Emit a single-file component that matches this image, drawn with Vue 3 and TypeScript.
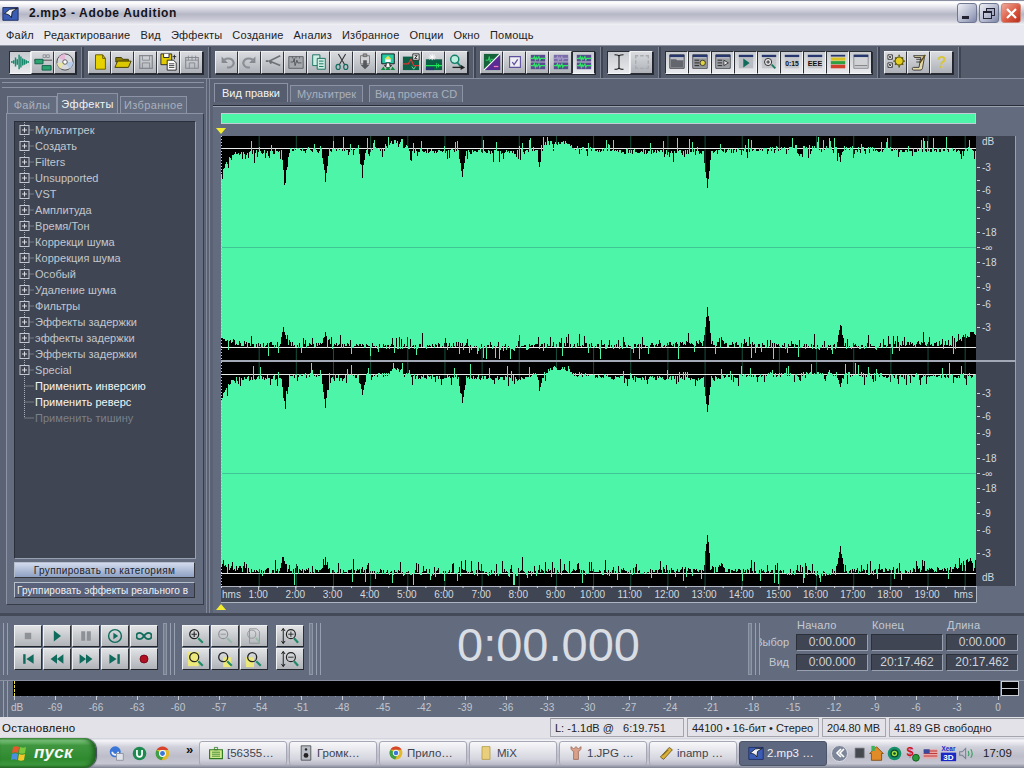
<script setup lang="ts">
import { h } from 'vue'
import type { FunctionalComponent } from 'vue'

type Shape = { d?: string; f?: string; s?: string; w?: number; t?: string; x?: number; y?: number; z?: number }

const P = (d: string, f = 'none', s = 'none', w = 1): Shape => ({ d, f, s, w })
const T = (t: string, x: number, y: number, z: number, f: string): Shape => ({ t, x, y, z, f })

const TEAL = '#0f6b5c'
const win = (extra: Shape[] = []): Shape[] => [
  P('M2 2h16v15H2z', '#b9bcc2', '#3a3d44'),
  P('M2 2h16v2.5H2z', '#26366e'),
  ...extra,
]
const stereo = (a: string, b: string, wave1: string, wave2: string): Shape[] => [
  P('M2 2h16v7.5H2z', a),
  P('M2 10.5h16V18H2z', b),
  P('M2 6h3l1-2 1 4 1-3 1 2 2-3 1 4 1-2h5', 'none', wave1, 1.3),
  P('M2 14h3l1-2 1 4 1-3 1 2 2-3 1 4 1-2h5', 'none', wave2, 1.3),
]
const mag = (inner: Shape[] = [], bg: Shape[] = []): Shape[] => [
  ...bg,
  P('M12.5 12.5l5 5', 'none', '#1d8a66', 2.4),
  P('M13 8a5 5 0 1 1-10 0a5 5 0 1 1 10 0z', 'none', '#222', 1.4),
  ...inner,
]
const vmag = (inner: string): Shape[] => [
  P('M2.5 2v16M.5 4.5l2-3 2 3M.5 15.5l2 3 2-3', 'none', '#111'),
  P('M14.5 12.5l4.5 5', 'none', '#1d8a66', 2.4),
  P('M16 8a5 5 0 1 1-10 0a5 5 0 1 1 10 0z', 'none', '#222', 1.3),
  P(inner, 'none', '#222'),
]

const icons: Record<string, Shape[]> = {
  wave: [P('M1 9v2M3 8v4M5 5v10M7 7v6M9 2v16M11 4v12M13 6v8M15 7v6M17 8v4M19 9v2', 'none', '#17896c', 1.6)],
  multi: [
    P('M10 2h3v3h-3zM14 2h3v3h-3z', 'none', '#8a8d92'),
    P('M0 8h20', 'none', '#444'),
    P('M1 7h9v5H1z', '#2aa36f', '#0c5c46'),
    P('M9 14h10v5H9z', '#2aa36f', '#0c5c46'),
  ],
  cd: [
    P('M19 10a9 9 0 1 1-18 0a9 9 0 1 1 18 0z', '#d8dae0', '#444'),
    P('M10 10L3 5a9 9 0 0 1 7-4z', '#e9b7d8'),
    P('M10 10L19 10a9 9 0 0 1-4 7.5z', '#b7cdea'),
    P('M10 10L5 17.5a9 9 0 0 1-4-6z', '#e8e3a6'),
    P('M12.5 10a2.5 2.5 0 1 1-5 0a2.5 2.5 0 1 1 5 0z', '#fff', '#555'),
  ],
  new: [P('M5 2h8l3 4v12H5z', '#e6d200', '#5d5400'), P('M13 2v4h3', 'none', '#5d5400')],
  open: [P('M2 8V5h6l2 2h6v3H2z', '#8a7c00', '#3b3500'), P('M1 16l3-7h15l-3 7z', '#dcc800', '#3b3500')],
  save: [P('M3 3h14v14H3z', 'none', '#85888e', 1.4), P('M6 3v5h8V3M6 17v-6h8v6', 'none', '#85888e')],
  saveas: [
    P('M1 1h12v12H1z', '#e2cc00', '#222'),
    P('M4 1v4h6V1', '#fff', '#222'),
    P('M8 8h7l3 3v8H8z', '#fff', '#222'),
    P('M10 12h6M10 14h6M10 16h6', 'none', '#333'),
    P('M16 2v5M14 4h4', 'none', '#222'),
  ],
  savesel: [
    P('M3 5h14v12H3z', 'none', '#85888e', 1.2),
    P('M3 8h14M6 3v5M10 3v5M14 3v5', 'none', '#85888e'),
    P('M7 17v-6h6v6', 'none', '#85888e'),
  ],
  undo: [P('M4 4v7h7', '#85888e'), P('M6 9a6 5 0 1 1 4 7', 'none', '#8c8f95', 2.4)],
  redo: [P('M16 4v7H9', '#85888e'), P('M14 9a6 5 0 1 0-4 7', 'none', '#8c8f95', 2.4)],
  trim: [P('M18 3L6 9l2 3M6 9l12 5', 'none', '#6e7176', 1.8), P('M2 9h3', 'none', '#6e7176', 2)],
  silence: [
    P('M2 4h16v13H2z', '#a5a8ad', '#5a5d62'),
    P('M4 10h3l1-4 1 8 2-6 1 3h4', 'none', '#4e5156'),
    P('M6 4v2M10 4v2M14 4v2', 'none', '#5a5d62'),
  ],
  copy: [
    P('M3 2h8v12H3z', '#cfeee2', TEAL),
    P('M8 6h9v12H8z', '#cfeee2', TEAL),
    P('M10 9h5M10 12h5M10 15h5', 'none', TEAL),
  ],
  cut: [
    P('M6 1l7 12M14 1L7 13', 'none', '#333', 1.2),
    P('M8 15.5a2.3 2.8 0 1 1-4.6 0a2.3 2.8 0 1 1 4.6 0zM16.5 15.5a2.3 2.8 0 1 1-4.6 0a2.3 2.8 0 1 1 4.6 0z', 'none', TEAL, 1.3),
  ],
  paste: [
    P('M5 3h10v9H5z', '#cfd1d5', '#777'),
    P('M8 1h4v3H8z', '#999', '#666'),
    P('M8 8h4v5h3l-5 5-5-5h3z', '#55585d'),
  ],
  mix: [
    P('M3 1h14v11H3z', '#27c9a6', '#111'),
    P('M6 7l4-4 4 4z', '#e8e24a'),
    P('M7 7h6v3H7z', '#fff'),
    P('M8 11h4v3h2l-4 3-4-3h2z', '#fff', '#222'),
    P('M2 19l3-4 2 4 3-4 3 4 2-4 3 4z', '#0d8a3c'),
  ],
  mix2: [
    P('M1 4h18v15H1z', '#0a5f45'),
    P('M1 12h6l3-5 3 7h6', 'none', '#e03030', 1.3),
    P('M12 1h7v7h-7z', '#eee', '#222'),
    P('M14 3h3l-3 3h3', 'none', '#222'),
    P('M11 15l2 3 2-3', 'none', '#7be0a8'),
  ],
  mix3: [
    P('M1 7h18v12H1z', '#0a5f45'),
    P('M1 14h18', 'none', '#1ee85a', 1.3),
    P('M1 16h9v3H1z', '#26366e'),
    P('M8 1v7M4 4.5h8M5 2l6 5M11 2L5 7', 'none', '#fff'),
    P('M13 11v6M15 12v4', 'none', '#1ee85a'),
  ],
  q: [
    P('M12 7a4.5 4.5 0 1 1-9 0a4.5 4.5 0 1 1 9 0z', '#bdeee0', '#14806a', 1.6),
    P('M10 10l4 5', 'none', '#14806a', 2),
    P('M5 16h10', 'none', '#222', 1.5),
    P('M14 13l5 3-5 3z', '#222'),
  ],
  diag: [
    P('M1 1h18v18H1z', '#15633b'),
    P('M19 1v18H1z', '#5a2b92'),
    P('M1 19L19 1', 'none', '#fff', 1.4),
    P('M3 8h3l1-4 1 6 1-3h3', 'none', '#36e06e'),
    P('M12 15h5', 'none', '#f47cc0', 1.4),
  ],
  check: [P('M4 4h12v12H4z', '#eeeef2', '#6050a0', 1.2), P('M7 10l2 3 4-6', 'none', '#6050a0', 1.4)],
  st1: stereo('#5a4a90', '#5a4a90', '#2ee864', '#2ee864'),
  st2: stereo('#7a6ca8', '#5a4a90', '#a49ac6', '#2ee864'),
  st3: stereo('#5a4a90', '#5a4a90', '#2ee864', '#2ee864'),
  ibeam: [P('M5 2c4 0 5 1 5 2v12c0 1-1 2-5 2M15 2c-4 0-5 1-5 2v12c0 1 1 2 5 2', 'none', '#111', 1.2)],
  sel: [P('M3 6V3h3M8 3h4M14 3h3v3M17 8v4M17 14v3h-3M12 17H8M6 17H3v-3M3 12V8', 'none', '#a8abb0', 1.5)],
  w1: win([P('M3 7h6l1 1h7v8H3z', '#63666c')]),
  w2: win([P('M3 6h14v10H3z', '#8f9296'), P('M4 8h5M4 11h5M4 14h5', 'none', '#222'), P('M16 11a3 3 0 1 1-6 0a3 3 0 1 1 6 0z', '#e0d440', '#333')]),
  w3: win([P('M3 6h14v10H3z', '#9a9da2'), P('M4 8h5M4 11h5M4 14h5', 'none', '#222'), P('M11 8l5 3-5 3z', '#e9e9ec', '#333')]),
  w4: [P('M2 2h16v15H2z', '#b9bcc2'), P('M2 2h16v2.5H2z', '#26366e'), P('M7 6l7 5-7 5z', TEAL)],
  w5: [P('M2 2h16v15H2z', '#c4c6cb'), P('M2 2h16v2.5H2z', '#26366e'), P('M13 13l4 4', 'none', '#187a5c', 2), P('M13 10a4 4 0 1 1-8 0a4 4 0 1 1 8 0z', '#e6e7ea', '#222'), P('M7 10h4M9 8v4', 'none', '#222')],
  w6: [P('M2 2h16v15H2z', '#c4c6cb'), P('M2 2h16v2.5H2z', '#26366e'), T('0:15', 10, 14.5, 7.5, '#111')],
  w7: [P('M2 2h16v15H2z', '#c4c6cb'), P('M2 2h16v2.5H2z', '#26366e'), T('EEE', 10, 14.5, 8, '#111')],
  w8: [P('M2 2h16v2H2z', '#26366e'), P('M2 5h16v3.5H2z', '#d8c020'), P('M2 9h16v3.5H2z', '#2fa040'), P('M2 13h16v4H2z', '#d0402a')],
  w9: [P('M2 2h16v15H2z', '#d0d2d6', '#85888e'), P('M2 2h16v2.5H2z', '#26366e'), P('M3 14h14', 'none', '#777')],
  gear: [
    P('M1 2h5v5H1zM1 11h5v5H1z', '#fff', '#333'),
    P('M2 3l3 3M5 3L2 6M2 12l3 3M5 12l-3 3', 'none', '#333'),
    P('M18 9a4.5 4.5 0 1 1-9 0a4.5 4.5 0 1 1 9 0z', '#e2cd20', '#5d5400', 1.2),
    P('M13.5 2v2M13.5 14v2M7 9h2M18 9h2M9 5l1.5 1.5M18 13l-1.5-1.5M18 5l-1.5 1.5M9 13l1.5-1.5', 'none', '#5d5400', 1.6),
  ],
  scroll: [
    P('M4 3h12v2l-2 11c0 2-1 3-3 3H4c-2 0-2-3 0-3h6l2-11H5z', '#e6d9a8', '#333'),
    P('M7 7h6M7 10h5', 'none', '#333'),
    P('M17 2l-6 9', 'none', '#5d4a10', 1.6),
  ],
  help: [T('?', 10, 16.5, 18, '#d9c640')],
  stop: [P('M6 6h8v8H6z', '#8e9196')],
  play: [P('M6 3l9 7-9 7z', TEAL)],
  pause: [P('M4 4h5v12H4zM11 4h5v12h-5z', '#8e9196')],
  loopplay: [P('M18 10a8 8 0 1 1-16 0a8 8 0 1 1 16 0z', 'none', TEAL, 1.8), P('M8 6l6 4-6 4z', TEAL)],
  loop: [P('M10 10c-2-3-3.5-4-5.5-4a4 4 0 0 0 0 8c2 0 3.5-1 5.5-4s3.5-4 5.5-4a4 4 0 0 1 0 8c-2 0-3.5-1-5.5-4z', 'none', TEAL, 2.2)],
  begin: [P('M4 4h3v12H4z', TEAL), P('M17 4v12l-9-6z', TEAL)],
  rew: [P('M10 4v12l-8-6zM18 4v12l-8-6z', TEAL)],
  ff: [P('M2 4v12l8-6zM10 4v12l8-6z', TEAL)],
  end: [P('M3 4v12l9-6z', TEAL), P('M13 4h3v12h-3z', TEAL)],
  rec: [P('M15 10a5 5 0 1 1-10 0a5 5 0 1 1 10 0z', '#b01020', '#6a0010')],
  zin: mag([P('M5 8h6M8 5v6', 'none', '#222', 1.2)]),
  zout: [P('M12.5 12.5l5 5', 'none', '#94b8a8', 2.2), P('M13 8a5 5 0 1 1-10 0a5 5 0 1 1 10 0z', 'none', '#8e9196', 1.3), P('M5 8h6', 'none', '#8e9196')],
  zfull: [P('M5 2h8l3 3v13H5z', 'none', '#8e9196'), P('M12 12l4 5', 'none', '#94b8a8', 2), P('M12 8a4.5 4.5 0 1 1-9 0a4.5 4.5 0 1 1 9 0z', 'none', '#8e9196')],
  zsel: mag([], [P('M1 2h12v16H1z', '#ece87a')]),
  zleft: mag([], [P('M8 8h9v11H8z', '#ece87a')]),
  zright: mag([], [P('M1 8h9v11H1z', '#ece87a')]),
  vin: vmag('M8 8h6M11 5v6'),
  vout: vmag('M8 8h6'),
  ie: [P('M15 8a6.5 6.5 0 1 1-13 0a6.5 6.5 0 1 1 13 0z', '#3a76d8'), P('M12 8a3.5 3.5 0 1 1-7 0', 'none', '#f2f4f8', 2), P('M10 10h8v8h-8z', '#dfe3ea', '#8a8f9a')],
  ut: [P('M18 10a8 8 0 1 1-16 0a8 8 0 1 1 16 0z', '#1f8a50'), P('M6 6v5a4 4 0 0 0 8 0V6h-2v5a2 2 0 0 1-4 0V6z', '#fff')],
  chrome: [
    P('M18 10a8 8 0 1 1-16 0a8 8 0 1 1 16 0z', '#e2b92a'),
    P('M3 6a8 8 0 0 1 14 0h-7z', '#d8432e'),
    P('M3 6a8 8 0 0 0 6 12l3-6z', '#3f9e48'),
    P('M13.5 10a3.5 3.5 0 1 1-7 0a3.5 3.5 0 1 1 7 0z', '#3a76d8', '#fff', 1.2),
  ],
  torrent: [P('M2 6h16v11H2z', '#cfe890', '#2f7a20', 1.4), P('M8 3h4v3H8zM5 9h10M5 11.5h10M5 14h10', 'none', '#2f7a20')],
  speaker: [P('M4 1h12v18H4z', '#b8bcc4', '#444'), P('M13 13a3 3 0 1 1-6 0a3 3 0 1 1 6 0z', '#222'), P('M11.5 5.5a1.5 1.5 0 1 1-3 0a1.5 1.5 0 1 1 3 0z', '#222')],
  folder: [P('M5 2h10v16H5z', '#e9cf7c', '#b49a48')],
  jpg: [P('M7 8c-3-1-4-4-3-6l3 3 3-3 3 3 3-3c1 2 0 5-3 6v10H7z', '#d8a088', '#9a6858')],
  winamp: [P('M3 15L14 3l4 3L7 18z', '#d8b13a', '#6a4f10'), P('M6 13l7-7', 'none', '#6a4f10')],
  au: [P('M1 3h18v15H1z', '#3a5cb4', '#16275c'), P('M3 10l6-5 9-1-6 4-1 7c-1-3-4-4-8-5z', '#eef1f7', '#111')],
  tray1: [P('M3 3h13v14H3z', '#45484e', '#7d8087')],
  tray2: [P('M10 2l8 8h-2v8H4v-8H2z', '#e08a28', '#7a4a10'), P('M4 1h4v6H4z', '#3bb05a')],
  tray3: [P('M18 10a8 8 0 1 1-16 0a8 8 0 1 1 16 0z', '#148f68'), P('M14 10a4 4 0 1 1-8 0a4 4 0 1 1 8 0z', '#9fdc3c', '#0a4a38', 1.5), P('M11.5 10a1.5 1.5 0 1 1-3 0a1.5 1.5 0 1 1 3 0z', '#0a4a38')],
  tray4: [T('$', 7, 13, 15, '#d01818'), P('M18 15a4 4 0 1 1-8 0a4 4 0 1 1 8 0z', '#2a9a3a', '#11501a')],
  tray5: [P('M2 5h16v11H2z', '#e8a8a8'), P('M2 7h16M2 10h16M2 13h16', 'none', '#c03838', 1.2), P('M2 5h7v5H2z', '#384a9c')],
  tray6: [P('M1 9h18v10H1z', '#1a28c8'), T('Xear', 10, 7.5, 7.5, '#1a28c8'), T('3D', 10, 17.5, 9.5, '#fff')],
  tray7: [P('M2 8h3l4-4v12l-4-4H2z', 'none', '#78808e', 1.2), P('M12 7c1 2 1 4 0 6M15 5c2 3 2 7 0 10', 'none', '#38a060', 1.3)],
}

const Ico: FunctionalComponent<{ n: string; size?: number }> = (p) =>
  h(
    'svg',
    { viewBox: '0 0 20 20', width: p.size ?? 20, height: p.size ?? 20, style: 'display:block;flex:none' },
    icons[p.n].map((s) =>
      s.t
        ? h('text', { x: s.x, y: s.y, 'font-size': s.z, fill: s.f, 'text-anchor': 'middle', 'font-weight': 'bold', 'font-family': 'Liberation Sans, sans-serif' }, s.t)
        : h('path', { d: s.d, fill: s.f, stroke: s.s, 'stroke-width': s.w }),
    ),
  )

const menu = ['Файл', 'Редактирование', 'Вид', 'Эффекты', 'Создание', 'Анализ', 'Избранное', 'Опции', 'Окно', 'Помощь']

const toolbar: { n: string; on?: boolean }[][] = [
  [{ n: 'wave', on: true }, { n: 'multi' }, { n: 'cd' }],
  [{ n: 'new' }, { n: 'open' }, { n: 'save' }, { n: 'saveas' }, { n: 'savesel' }],
  [{ n: 'undo' }, { n: 'redo' }, { n: 'trim' }, { n: 'silence' }, { n: 'copy' }, { n: 'cut' }, { n: 'paste' }, { n: 'mix' }, { n: 'mix2' }, { n: 'mix3' }, { n: 'q' }],
  [{ n: 'diag' }, { n: 'check' }, { n: 'st1' }, { n: 'st2' }, { n: 'st3', on: true }],
  [{ n: 'ibeam', on: true }, { n: 'sel' }],
  [{ n: 'w1', on: true }, { n: 'w2', on: true }, { n: 'w3', on: true }, { n: 'w4', on: true }, { n: 'w5', on: true }, { n: 'w6', on: true }, { n: 'w7', on: true }, { n: 'w8', on: true }, { n: 'w9', on: true }],
  [{ n: 'gear' }, { n: 'scroll' }, { n: 'help' }],
]

const tree = [
  'Мультитрек', 'Создать', 'Filters', 'Unsupported', 'VST', 'Амплитуда', 'Время/Тон', 'Коррекци шума',
  'Коррекция шума', 'Особый', 'Удаление шума', 'Фильтры', 'Эффекты задержки', 'эффекты задержки',
  'Эффекты задержки', 'Special',
]

const transport = ['stop', 'play', 'pause', 'loopplay', 'loop', 'begin', 'rew', 'ff', 'end', 'rec']
const zooms = ['zin', 'zout', 'zfull', 'zsel', 'zleft', 'zright']

const quick = ['ie', 'ut', 'chrome']
const tasks = [
  { icon: 'torrent', label: '[56355…' },
  { icon: 'speaker', label: 'Громк…' },
  { icon: 'chrome', label: 'Прило…' },
  { icon: 'folder', label: 'MiX' },
  { icon: 'jpg', label: '1.JPG …' },
  { icon: 'winamp', label: 'inamp …' },
  { icon: 'au', label: '2.mp3 …', active: true },
]
const tray = ['tray2', 'tray3', 'tray4', 'tray5', 'tray6', 'tray7']

// ---- waveform ----
function rng(seed: number) {
  let a = seed
  return () => {
    a = (a + 0x6d2b79f5) | 0
    let t = Math.imul(a ^ (a >>> 15), 1 | a)
    t = (t + Math.imul(t ^ (t >>> 7), 61 | t)) ^ t
    return ((t ^ (t >>> 14)) >>> 0) / 4294967296
  }
}

// x from the wave's left edge, y from the channel's top
const topBase = [[0, 36], [4, 28], [10, 18], [14, 15], [60, 14], [80, 12], [120, 13], [165, 11], [174, 4], [190, 13], [240, 14], [300, 15], [318, 10], [330, 5], [345, 5], [352, 11], [400, 14], [480, 15], [510, 13], [580, 10], [640, 11], [680, 13], [756, 12]]
const botBase = [[0, 204], [6, 208], [40, 211], [120, 211], [180, 213], [240, 211], [295, 215], [330, 211], [400, 213], [480, 209], [520, 211], [600, 213], [680, 211], [730, 209], [756, 197]]
const dips = [[64, 34], [104, 30], [141, 20], [241, 24], [318, 18], [486, 36], [619, 12], [578, 8]]
const botDips = [[62, 16], [104, 12], [486, 34], [619, 24], [500, 8], [300, 5]]

function lerp(points: number[][], x: number) {
  for (let i = 1; i < points.length; i++) {
    if (x <= points[i][0]) {
      const [x0, y0] = points[i - 1]
      const [x1, y1] = points[i]
      return y0 + ((y1 - y0) * (x - x0)) / (x1 - x0)
    }
  }
  return points[points.length - 1][1]
}

function buildWave(seed: number) {
  const r = rng(seed)
  const top: number[] = []
  const bot: number[] = []
  for (let x = 0; x < 755; x++) {
    let t = lerp(topBase, x) + r() * 5 - 1
    let b = lerp(botBase, x) - r() * 6 + 1
    const sTop = r()
    if (sTop > 0.92) t -= 3 + r() * 9
    else if (sTop < 0.1) t += 2 + r() * 7
    const sBot = r()
    if (sBot > 0.92) b += 4 + r() * 9
    else if (sBot < 0.12) b -= 2 + r() * 9
    for (const [dx, depth] of dips) {
      const d = Math.abs(x - dx)
      if (d < 4) t += depth * (1 - d / 4)
    }
    for (const [dx, depth] of botDips) {
      const d = Math.abs(x - dx)
      if (d < 4) b -= depth * (1 - d / 4)
    }
    top.push(Math.max(1, t))
    bot.push(Math.min(223, b))
  }
  let d = `M0 ${top[0].toFixed(0)}`
  top.forEach((y, x) => (d += `L${x} ${y.toFixed(0)}L${x + 1} ${y.toFixed(0)}`))
  for (let x = 754; x >= 0; x--) d += `L${x + 1} ${bot[x].toFixed(0)}L${x} ${bot[x].toFixed(0)}`
  return d + 'Z'
}

const channels = [
  { d: buildWave(11), labels: [['dB', 5], ['-3', 31], ['-6', 54], ['-9', 71], ['-18', 96], ['-∞', 111], ['-18', 126], ['-9', 151], ['-6', 168], ['-3', 191]] },
  { d: buildWave(47), labels: [['-3', 31], ['-6', 54], ['-9', 71], ['-18', 96], ['-∞', 111], ['-18', 126], ['-9', 151], ['-6', 168], ['-3', 191], ['dB', 215]] },
]
const dbTicks = [31, 44, 54, 71, 82, 96, 111, 126, 140, 151, 168, 191]
const minutes = Array.from({ length: 20 }, (_, i) => i + 1).map((m) => ({ m, x: m * 37.16 }))
const minuteTicks = Array.from({ length: 40 }, (_, i) => (i * 37.16) / 2)

const meter = Array.from({ length: 23 }, (_, i) => ({ label: `-${69 - i * 3}`, x: 42 + 41 * i }))
</script>

<template>
  <div class="app">
    <header class="title">
      <Ico n="au" :size="17" />
      <span class="title-text">2.mp3 - Adobe Audition</span>
      <div class="win-btns">
        <div class="wb"><span class="min"></span></div>
        <div class="wb"><span class="rest"></span></div>
        <div class="wb close"><svg width="13" height="13" viewBox="0 0 13 13"><path d="M2 2l9 9M11 2l-9 9" stroke="#fff" stroke-width="2.2" /></svg></div>
      </div>
    </header>

    <nav class="menu">
      <span v-for="m in menu" :key="m">{{ m }}</span>
    </nav>

    <div class="toolbar">
      <template v-for="(group, gi) in toolbar" :key="gi">
        <div class="tgroup" :class="{ first: gi === 0 }">
          <div v-for="b in group" :key="b.n" class="tbtn" :class="{ on: b.on }"><Ico :n="b.n" :size="18" /></div>
        </div>
        <div class="tsep"></div>
      </template>
    </div>

    <main class="main">
      <aside class="left">
        <div class="ridge"></div>
        <div class="ltabs">
          <div class="ltab" style="width: 50px">Файлы</div>
          <div class="ltab active" style="width: 61px">Эффекты</div>
          <div class="ltab" style="width: 67px; margin-left: 2px">Избранное</div>
        </div>
        <div class="lpanel">
          <div class="tree">
            <div v-for="(t, i) in tree" :key="i" class="row">
              <svg width="20" height="16" viewBox="0 0 20 16" class="rowico">
                <path d="M9.5 0v16M9.5 8h10" stroke="#a9aeb8" stroke-dasharray="1 1" fill="none" />
                <rect x="5" y="3.5" width="9" height="9" fill="#3f4552" stroke="#c4c8d0" />
                <path d="M7 8h5M9.5 5.5v5" stroke="#d8dbe0" />
              </svg>
              <span>{{ t }}</span>
            </div>
            <div class="row white">
              <svg width="20" height="16" viewBox="0 0 20 16" class="rowico"><path d="M9.5 0v16M9.5 8h10" stroke="#a9aeb8" stroke-dasharray="1 1" fill="none" /></svg>
              <span>Применить инверсию</span>
            </div>
            <div class="row white">
              <svg width="20" height="16" viewBox="0 0 20 16" class="rowico"><path d="M9.5 0v16M9.5 8h10" stroke="#a9aeb8" stroke-dasharray="1 1" fill="none" /></svg>
              <span>Применить реверс</span>
            </div>
            <div class="row muted">
              <svg width="20" height="16" viewBox="0 0 20 16" class="rowico"><path d="M9.5 0v8h10" stroke="#a9aeb8" stroke-dasharray="1 1" fill="none" /></svg>
              <span>Применить тишину</span>
            </div>
          </div>
          <button class="group-btn on">Группировать по категориям</button>
          <button class="group-btn">Группировать эффекты реального в</button>
        </div>
      </aside>

      <section class="right">
        <div class="rtabs">
          <div class="rtab active" style="width: 74px">Вид правки</div>
          <div class="rtab" style="width: 73px">Мультитрек</div>
          <div class="rtab" style="width: 94px; margin-left: 4px">Вид проекта CD</div>
        </div>
        <div class="rbody">
          <div class="overview"></div>
          <div class="marker"><svg width="12" height="8" viewBox="0 0 12 8"><path d="M0 0h10l-5 6z" fill="#f4ec30" /></svg></div>
          <div class="wave-frame">
            <template v-for="(c, ci) in channels" :key="ci">
              <div v-if="ci === 1" class="divider"></div>
              <svg width="795" height="224" viewBox="0 0 795 224" class="channel">
                <rect width="755" height="224" fill="#000" />
                <rect x="755" width="40" height="224" fill="#3f4552" />
                <path d="M794.5 0v224" stroke="#9aa2b2" />
                <path v-for="tx in minutes" :key="tx.m" :d="`M${tx.x + 1} 0v224`" stroke="#17503e" />
                <path d="M0 12.5h755M0 211.5h755" stroke="#e8ece8" />
                <path :d="c.d" fill="#4cf5a8" />
                <path d="M0 111.5h755" stroke="#3fc596" />
                <path d="M0.5 0v224" stroke="#e8e040" stroke-dasharray="1 2" />
                <path v-for="y in dbTicks" :key="y" :d="`M756 ${y + 0.5}h3`" stroke="#cfd3da" />
                <text v-for="l in c.labels" :key="`${l[0]}${l[1]}`" x="761" :y="Number(l[1]) + 4" class="scale">{{ l[0] }}</text>
              </svg>
            </template>
            <svg width="756" height="17" viewBox="0 0 756 17" class="ruler">
              <rect width="755" height="17" fill="#3f4552" />
              <path d="M0 .5h755M0 16.5h755.5V0" stroke="#aeb4c0" fill="none" />
              <path v-for="x in minuteTicks" :key="x" :d="`M${x + 0.5} 0v2`" stroke="#cfd3da" />
              <path v-for="tx in minutes" :key="tx.m" :d="`M${tx.x + 0.5} 0v4`" stroke="#cfd3da" />
              <text x="1" y="12" class="scale">hms</text>
              <text v-for="tx in minutes.slice(0, 19)" :key="tx.m" :x="tx.x" y="12" text-anchor="middle" class="scale">{{ tx.m }}:00</text>
              <text x="733" y="12" class="scale">hms</text>
            </svg>
          </div>
          <div class="marker low"><svg width="12" height="8" viewBox="0 0 12 8"><path d="M0 7h10L5 1z" fill="#f4ec30" /></svg></div>
        </div>
      </section>
    </main>

    <div class="transport">
      <div class="grip"></div>
      <div class="btn-grid">
        <div v-for="b in transport" :key="b" class="tr-btn"><Ico :n="b" :size="16" /></div>
      </div>
      <div class="bar"></div>
      <div class="grip wide"></div>
      <div class="zoom-grid">
        <div v-for="b in zooms" :key="b" class="tr-btn"><Ico :n="b" :size="18" /></div>
      </div>
      <div class="zoom-v">
        <div class="tr-btn"><Ico n="vin" :size="18" /></div>
        <div class="tr-btn"><Ico n="vout" :size="18" /></div>
      </div>
      <div class="bar"></div>
      <div class="grip wide"></div>
      <div class="clock">0:00.000</div>
      <div class="bar"></div>
      <div class="grip wide"></div>
      <div class="times">
        <span></span><span class="th">Начало</span><span class="th">Конец</span><span class="th">Длина</span>
        <span class="rl">Выбор</span><span class="cell">0:00.000</span><span class="cell"></span><span class="cell">0:00.000</span>
        <span class="rl">Вид</span><span class="cell">0:00.000</span><span class="cell">20:17.462</span><span class="cell">20:17.462</span>
      </div>
    </div>

    <div class="meter">
      <div class="grip"></div>
      <div class="meter-body">
        <div class="meter-top">
          <div class="meter-black"><span class="peak"></span></div>
          <div class="meter-box"></div>
        </div>
        <svg width="1006" height="20" viewBox="0 0 1006 20" class="meter-scale">
          <path d="M0 .5h990" stroke="#8d95a4" stroke-dasharray="1 6" />
          <path d="M1.5 0v4M985.5 0v4" stroke="#c8ccd4" />
          <path v-for="t in meter" :key="t.x" :d="`M${t.x + 0.5} 0v4`" stroke="#c8ccd4" />
          <text x="4" y="14.5" text-anchor="middle" class="scale small">dB</text>
          <text v-for="t in meter" :key="t.x" :x="t.x" y="14.5" text-anchor="middle" class="scale small">{{ t.label }}</text>
          <text x="985" y="14.5" text-anchor="middle" class="scale small">0</text>
        </svg>
      </div>
    </div>

    <footer class="status">
      <span class="st-msg">Остановлено</span>
      <span class="st-cell" style="width: 134px">L: -1.1dB @&nbsp;&nbsp; 6:19.751</span>
      <span class="st-cell" style="width: 132px">44100 • 16-бит • Стерео</span>
      <span class="st-cell" style="width: 64px">204.80 MB</span>
      <span class="st-cell last">41.89 GB свободно</span>
    </footer>

    <div class="taskbar">
      <div class="start">
        <svg width="18" height="18" viewBox="0 0 18 18">
          <path d="M2 3c2-1 4-1 6 0l-1 6c-2-1-4-1-6 0z" fill="#e8582c" />
          <path d="M9 3c2 1 4 1 6 0l-1 6c-2 1-4 1-6 0z" fill="#7cc83c" />
          <path d="M1 10c2-1 4-1 6 0l-1 6c-2-1-4-1-6 0z" fill="#4a90e0" />
          <path d="M8 10c2 1 4 1 6 0l-1 6c-2 1-4 1-6 0z" fill="#f4c828" />
        </svg>
        <span>пуск</span>
      </div>
      <div class="quick">
        <Ico v-for="q in quick" :key="q" :n="q" :size="17" />
        <span class="more">»</span>
      </div>
      <div v-for="t in tasks" :key="t.label" class="task" :class="{ active: t.active }">
        <Ico :n="t.icon" :size="16" />
        <span>{{ t.label }}</span>
      </div>
      <div class="notify">
        <span class="chev"><svg width="14" height="14" viewBox="0 0 14 14"><path d="M8 3L4 7l4 4M11 3L7 7l4 4" fill="none" stroke="#fff" stroke-width="1.6" /></svg></span>
        <Ico n="tray1" :size="14" />
        <Ico v-for="t in tray" :key="t" :n="t" :size="17" />
        <span class="clock-tray">17:09</span>
      </div>
    </div>
  </div>
</template>

<style scoped>
.app {
  width: 1024px;
  height: 768px;
  overflow: hidden;
  display: flex;
  flex-direction: column;
  background: #5a6273;
  font-family: 'Liberation Sans', Arial, sans-serif;
  font-size: 11px;
  color: #d3d7de;
}
.title {
  height: 25px;
  flex: none;
  display: flex;
  align-items: center;
  padding: 0 2px 0 2px;
  gap: 10px;
  background: linear-gradient(#f4f4f8 0, #fff 8%, #dcdce6 30%, #b6b7c6 55%, #cdcdd9 80%, #f2f2f6 100%);
  border-top: 1px solid #8b8fa2;
  box-sizing: border-box;
}
.title-text {
  font-weight: bold;
  font-size: 12px;
  letter-spacing: 0.65px;
  color: #14141a;
  flex: 1;
}
.win-btns {
  display: flex;
  gap: 2px;
  margin-right: 1px;
}
.wb {
  width: 20px;
  height: 20px;
  border-radius: 3px;
  border: 1px solid #6f7690;
  box-sizing: border-box;
  background: linear-gradient(135deg, #eef0f6, #a5abc4 70%, #7e86a8);
  display: flex;
  align-items: center;
  justify-content: center;
  position: relative;
}
.wb.close {
  background: linear-gradient(135deg, #f0a898, #d8543c 60%, #b83020);
  border-color: #c8867a;
}
.min {
  width: 7px;
  height: 3px;
  background: #223;
  margin-top: 9px;
  margin-right: 3px;
}
.rest {
  width: 9px;
  height: 8px;
  border: 1px solid #223;
  border-top-width: 2px;
  box-sizing: border-box;
  box-shadow: 3px -3px 0 -1px #a5abc4, 3px -3px 0 0 #223;
  margin: 3px 3px 0 0;
}
.menu {
  height: 21px;
  flex: none;
  display: flex;
  align-items: center;
  gap: 10px;
  padding-left: 6px;
  background: #e9e9f1;
  color: #222;
  font-size: 11px;
  letter-spacing: 0.2px;
  border-bottom: 1px solid #8d93a2;
  box-sizing: border-box;
}
.toolbar {
  height: 33px;
  flex: none;
  display: flex;
  align-items: center;
  padding-left: 9px;
  background: #555d6c;
  border-bottom: 1px solid #868e9e;
  box-sizing: border-box;
}
.tgroup {
  display: flex;
  box-shadow: 1px 1px 0 #262a33;
}
.tsep {
  width: 3px;
  margin: -6px 4px -6px 5px;
  height: 31px;
  background: #3f4552;
  border-left: 1px solid #7c8494;
  box-sizing: border-box;
}
.tbtn {
  width: 23px;
  height: 23px;
  box-sizing: border-box;
  display: flex;
  align-items: center;
  justify-content: center;
  background: linear-gradient(#d9dbdf, #aeb2b8);
  border: 1px solid;
  border-color: #eceef0 #33363d #2a2d33 #eceef0;
}
.tgroup.first .tbtn {
  width: 22.4px;
}
.tbtn.on {
  background: linear-gradient(#c8cbd0, #e8e9ec);
  border-color: #2a2d33 #f4f5f7 #f6f7f9 #2a2d33;
}
.tbtn:last-child {
  border-right-color: #22252b;
}
.main {
  height: 534px;
  flex: none;
  display: flex;
}
.left {
  width: 207px;
  flex: none;
  background: #5a6273;
  border-right: 1px solid #80889a;
  box-sizing: border-box;
}
.ridge {
  height: 4px;
  margin: 3px 2px 0;
  border-top: 1px solid #8b93a4;
  border-bottom: 1px solid #8b93a4;
}
.ltabs {
  display: flex;
  align-items: flex-end;
  height: 25px;
  padding-left: 7px;
}
.ltab {
  height: 17px;
  line-height: 17px;
  text-align: center;
  background: #646d80;
  color: #aab0bc;
  border: 1px solid #8b93a4;
  border-bottom: none;
  box-sizing: border-box;
  letter-spacing: 0.35px;
}
.ltab.active {
  height: 20px;
  line-height: 20px;
  color: #f1f3f6;
  background: #646d80;
}
.lpanel {
  margin-left: 6px;
  width: 198px;
  height: 492px;
  box-sizing: border-box;
  background: #646d80;
  border: 1px solid #8b93a4;
  border-right-color: #383d48;
  border-bottom-color: #383d48;
  padding: 7px 7px 0;
}
.tree {
  height: 438px;
  background: #3f4552;
  box-sizing: border-box;
  border: 1px solid #2b2f39;
  border-right-color: #97a0b0;
  border-bottom-color: #97a0b0;
  margin-bottom: 3px;
}
.row {
  height: 16px;
  display: flex;
  align-items: center;
  letter-spacing: 0.05px;
  color: #c3c7cf;
}
.rowico {
  flex: none;
}
.row.white {
  color: #f4f5f7;
}
.row.muted {
  color: #7a808c;
}
.group-btn {
  display: block;
  width: 181px;
  height: 16px;
  margin: 0 0 4px;
  padding: 0 2px;
  border: 1px solid;
  border-color: #b6bdcb #33363d #33363d #b6bdcb;
  background: #59627a;
  color: #f0f2f5;
  font-family: inherit;
  font-size: 10px;
  letter-spacing: 0.1px;
  white-space: nowrap;
  overflow: hidden;
  text-align: left;
  box-sizing: border-box;
}
.group-btn.on {
  background: linear-gradient(#d2dbee, #8ea0c2);
  color: #20242c;
  text-align: center;
  letter-spacing: 0.36px;
}
.right {
  flex: 1;
  display: flex;
  flex-direction: column;
  padding-left: 3px;
  background: #5a6273;
  border-left: 1px solid #80889a;
  margin-left: 2px;
}
.rtabs {
  height: 27px;
  flex: none;
  display: flex;
  align-items: flex-end;
  padding: 0 0 3px 1px;
  border-bottom: 1px solid #2a2e38;
  box-sizing: border-box;
  gap: 2px;
}
.rtab {
  height: 17px;
  line-height: 16px;
  text-align: center;
  background: #646d80;
  color: #aab0bc;
  border: 1px solid #8b93a4;
  border-bottom: none;
  box-sizing: border-box;
}
.rtab.active {
  height: 19px;
  line-height: 18px;
  color: #f1f3f6;
  background: #555d6e;
}
.rbody {
  flex: 1;
  background: #636c7e;
  padding: 6px 0 0 8px;
  border-top: 1px solid #9aa2b2;
  box-sizing: border-box;
}
.overview {
  width: 755px;
  height: 11px;
  background: #4cf5a8;
  border: 1px solid #c6ccd5;
  box-sizing: border-box;
}
.marker {
  height: 12px;
  display: flex;
  align-items: flex-end;
  margin-left: -5px;
}
.marker.low {
  height: 9px;
  align-items: flex-start;
}
.wave-frame {
  width: 795px;
  display: flex;
  flex-direction: column;
}
.divider {
  height: 2px;
  background: #a3a9b6;
  width: 795px;
}
.channel,
.ruler {
  display: block;
}
.scale {
  fill: #d5d8de;
  font-size: 10px;
  font-family: 'Liberation Sans', Arial, sans-serif;
}
.scale.small {
  fill: #c2c6ce;
}
.transport {
  height: 67px;
  flex: none;
  display: flex;
  align-items: stretch;
  padding: 7px 0 5px 3px;
  background: #636c7e;
  border-top: 3px solid #444a57;
  box-sizing: border-box;
}
.grip {
  width: 5px;
  border-left: 1px solid #96a0b0;
  border-right: 1px solid #96a0b0;
  box-sizing: border-box;
  flex: none;
}
.grip.wide {
  margin-left: 3px;
}
.bar {
  width: 4px;
  background: #77808f;
  border: 1px solid #8e97a8;
  box-sizing: border-box;
  flex: none;
}
.btn-grid {
  display: grid;
  grid-template-columns: repeat(5, 28px);
  grid-auto-rows: 22px;
  gap: 1px;
  margin: 2px 5px 0 6px;
}
.zoom-grid {
  display: grid;
  grid-template-columns: repeat(3, 28px);
  grid-auto-rows: 22px;
  gap: 1px;
  margin: 2px 0 0 7px;
}
.zoom-v {
  display: grid;
  grid-template-columns: 28px;
  grid-auto-rows: 22px;
  gap: 1px;
  margin: 2px 5px 0 8px;
}
.tr-btn {
  display: flex;
  align-items: center;
  justify-content: center;
  box-sizing: border-box;
  background: linear-gradient(#e0e2e4, #b0b3b8);
  border: 1px solid;
  border-color: #f0f1f3 #2d3036 #23262b #f0f1f3;
}
.clock {
  flex: 1;
  text-align: center;
  font-size: 47px;
  line-height: 44px;
  padding-left: 28px;
  color: #d9dde4;
}
.times {
  width: 258px;
  flex: none;
  display: grid;
  grid-template-columns: 33px 72px 72px 72px;
  grid-template-rows: 12px 17px 17px;
  column-gap: 3px;
  row-gap: 3px;
  margin: -4px 6px 0 0;
}
.th {
  color: #c5c9d2;
  font-size: 11px;
  line-height: 12px;
  letter-spacing: 0.2px;
  padding-left: 1px;
}
.rl {
  text-align: right;
  padding-right: 4px;
  line-height: 17px;
  color: #c5c9d2;
  overflow: hidden;
  white-space: nowrap;
  direction: rtl;
}
.cell {
  background: #3f4552;
  border: 1px solid;
  border-color: #2c3039 #99a1b0 #99a1b0 #2c3039;
  box-sizing: border-box;
  text-align: center;
  font-size: 12px;
  line-height: 15px;
  color: #cfd3da;
}
.meter {
  height: 37px;
  flex: none;
  display: flex;
  background: #636c7e;
  padding-left: 3px;
  border-top: 1px solid #8a92a2;
  box-sizing: border-box;
}
.meter-body {
  flex: 1;
  padding-left: 5px;
}
.meter-top {
  display: flex;
  height: 15px;
}
.meter-black {
  width: 987px;
  background: #000;
  position: relative;
}
.peak {
  position: absolute;
  left: 1px;
  top: 0;
  bottom: 0;
  border-left: 1px dashed #eee23a;
}
.meter-box {
  width: 18px;
  margin-left: 1px;
  background: #000;
  border: 1px solid #c9ccd2;
  box-sizing: border-box;
  background-image: linear-gradient(#000 45%, #c9ccd2 45%, #c9ccd2 55%, #000 55%);
}
.meter-scale {
  display: block;
  overflow: visible;
}
.status {
  height: 21px;
  flex: none;
  display: flex;
  align-items: center;
  background: #e3e2e8;
  color: #111;
  font-size: 11px;
  box-sizing: border-box;
  padding-left: 2px;
}
.st-msg {
  width: 548px;
  flex: none;
  font-size: 11.5px;
  letter-spacing: 0.25px;
}
.st-cell {
  height: 19px;
  line-height: 18px;
  padding-left: 4px;
  margin-right: 3px;
  border: 1px solid #a5a5ad;
  border-top-color: #8f8f98;
  box-sizing: border-box;
  flex: none;
  color: #222;
  white-space: nowrap;
  overflow: hidden;
}
.st-cell.last {
  margin-right: 0;
  flex: 1;
  border-right: none;
}
.taskbar {
  height: 30px;
  flex: none;
  display: flex;
  align-items: center;
  gap: 2px;
  background: linear-gradient(#ccccd8 0, #f4f4f8 8%, #cfd0da 30%, #bdbeca 60%, #c5c6d2 85%, #7f8392 100%);
  position: relative;
}
.start {
  width: 96px;
  height: 30px;
  flex: none;
  display: flex;
  align-items: center;
  gap: 5px;
  padding-left: 11px;
  box-sizing: border-box;
  border-radius: 0 12px 12px 0;
  background: linear-gradient(#53a453 0, #7cc47c 8%, #3f963f 25%, #2f8a2f 70%, #3f993f 90%, #286f28 100%);
  box-shadow: inset -3px 0 4px #1e5f1e, 1px 0 1px #3c4450;
  color: #f6f8f4;
  font-style: italic;
  font-weight: bold;
  font-size: 17px;
  letter-spacing: 0.2px;
}
.quick {
  width: 99px;
  flex: none;
  display: flex;
  align-items: center;
  gap: 6px;
  padding-left: 10px;
  box-sizing: border-box;
}
.more {
  color: #111;
  font-size: 13px;
  font-weight: bold;
  margin: -8px 0 0 9px;
}
.task {
  width: 88px;
  height: 25px;
  flex: none;
  display: flex;
  align-items: center;
  gap: 3px;
  padding-left: 8px;
  box-sizing: border-box;
  border-radius: 3px;
  border: 1px solid #a6a8b6;
  background: linear-gradient(#f8f8fa, #d4d5de 75%, #b6b7c4);
  color: #3f4450;
  font-size: 11.5px;
}
.task.active {
  background: #5d6880;
  border-color: #4c566a;
  color: #eef1f5;
}
.notify {
  flex: 1;
  align-self: stretch;
  display: flex;
  align-items: center;
  gap: 1px;
  padding-left: 2px;
}
.chev {
  width: 17px;
  height: 17px;
  border-radius: 50%;
  background: #7d8598;
  border: 1px solid #dfe1e8;
  box-sizing: border-box;
  display: flex;
  align-items: center;
  justify-content: center;
  flex: none;
  margin-right: 4px;
}
.clock-tray {
  margin-left: 7px;
  color: #1a1c22;
  font-size: 11.5px;
}
</style>

<style>
html,
body {
  margin: 0;
  background: #5a6273;
}
</style>
